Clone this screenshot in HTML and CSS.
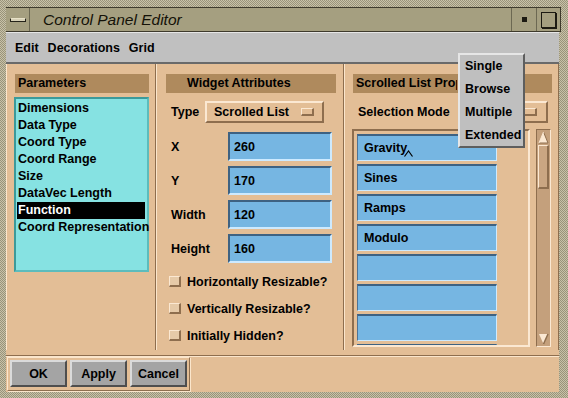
FILE: index.html
```html
<!DOCTYPE html>
<html lang="en">
<head>
	<meta charset="UTF-8">
	<title>Control Panel Editor</title>
	<link rel="stylesheet" href="styles.css">
</head>
<body>
	<div class="screen">
		<div class="titlebar">
			<div class="tb-menu"><span class="tb-bar"></span></div>
			<div class="tb-title">Control Panel Editor</div>
			<div class="tb-min"><span class="tb-dot"></span></div>
			<div class="tb-max"><span class="tb-square"></span></div>
		</div>
		<div class="window">
			<div class="menubar">
				<span>Edit</span>
				<span>Decorations</span>
				<span>Grid</span>
			</div>
			<div class="work">
				<!-- parameters -->
				<div class="panel p-params">
					<div class="head">Parameters</div>
					<ul class="plist">
						<li>Dimensions</li>
						<li>Data Type</li>
						<li>Coord Type</li>
						<li>Coord Range</li>
						<li>Size</li>
						<li>DataVec Length</li>
						<li class="sel">Function</li>
						<li>Coord Representation</li>
					</ul>
				</div>
				<!-- widget attributes -->
				<div class="panel p-widget">
					<div class="head head-widget">Widget Attributes</div>
					<div class="row row-type">
						<span class="lbl lbl-type">Type</span>
						<div class="option opt-type">Scrolled List<span class="opt-ind"></span></div>
					</div>
					<div class="row row-field first">
						<span class="lbl">X</span>
						<div class="field">260</div>
					</div>
					<div class="row row-field">
						<span class="lbl">Y</span>
						<div class="field">170</div>
					</div>
					<div class="row row-field">
						<span class="lbl">Width</span>
						<div class="field">120</div>
					</div>
					<div class="row row-field">
						<span class="lbl">Height</span>
						<div class="field">160</div>
					</div>
					<div class="checks">
						<div class="check"><span class="check-box"></span>Horizontally Resizable?</div>
						<div class="check"><span class="check-box"></span>Vertically Resizable?</div>
						<div class="check"><span class="check-box"></span>Initially Hidden?</div>
					</div>
				</div>
				<!-- scrolled list properties, partly under the open menu -->
				<div class="panel p-list">
					<div class="head"><span class="head-clip">Scrolled List Properties</span></div>
					<div class="row row-mode">
						<span class="lbl">Selection Mode</span>
						<div class="option opt-mode"><span class="opt-ind"></span></div>
					</div>
					<div class="list-wrap">
						<div class="slist">
							<div class="sitem">Gravity</div>
							<div class="sitem">Sines</div>
							<div class="sitem">Ramps</div>
							<div class="sitem">Modulo</div>
							<div class="sitem"></div>
							<div class="sitem"></div>
							<div class="sitem"></div>
							<div class="sitem"></div>
						</div>
						<div class="sbar">
							<svg class="arrow" width="11" height="13" viewBox="0 0 11 13">
								<polygon points="5.5,1 10,12 1,12" fill="#fbe8d2"/>
								<polyline points="5.5,1 10,12 1,12" fill="none" stroke="#8e6e4e" stroke-width="1"/>
								<line x1="5.5" y1="1" x2="1" y2="12" stroke="#fbe8d2" stroke-width="1"/>
							</svg>
							<div class="thumb"></div>
							<div class="trough"></div>
							<svg class="arrow" width="11" height="12" viewBox="0 0 11 12">
								<polygon points="1,1 10,1 5.5,11" fill="#fbe8d2"/>
								<line x1="10" y1="1" x2="5.5" y2="11" stroke="#8e6e4e" stroke-width="1.5"/>
							</svg>
						</div>
					</div>
				</div>
			</div>
			<div class="actions">
				<div class="btnbox">
					<div class="btn">OK</div>
					<div class="btn">Apply</div>
					<div class="btn">Cancel</div>
				</div>
			</div>
		</div>

		<!-- open option menu -->
		<ul class="popup">
			<li>Single</li>
			<li>Browse</li>
			<li>Multiple</li>
			<li>Extended</li>
		</ul>
		<svg class="caret" width="9" height="7" viewBox="0 0 9 7">
			<polyline points="0.5,6.5 4.5,1 8.5,6.5" fill="none" stroke="#000" stroke-width="1.2"/>
		</svg>
	</div>
</body>
</html>
```

FILE: styles.css
```css
*{
    margin:0;
    padding:0;
    box-sizing:border-box;
}
body{
    width:568px;
    height:398px;
    overflow:hidden;
    font-family:"Liberation Sans", Arial, sans-serif;
    font-weight:bold;
    font-size:12.5px;
    color:#000;
}
ul{
    list-style:none;
}

/* window frame */
.screen{
    position:relative;
    width:568px;
    height:398px;
    padding:7px 7px 6px 6px;
    background-color:#aea88e;
    background-image:repeating-conic-gradient(#c8c2a8 0 25%, #99937a 0 50%);
    background-size:2px 2px;
}
.titlebar{
    display:flex;
    height:25px;
    background:#a59f80;
    border:1px solid #3e3a2c;
    border-left:none;
}
.tb-menu{
    width:24px;
    border-right:1px solid #6c6852;
    display:flex;
    align-items:center;
    justify-content:center;
}
.tb-bar{
    width:16px;
    height:4px;
    background:#d6d0b6;
    border:1px solid #25231a;
    border-top-color:#e8e2c8;
}
.tb-title{
    flex:1;
    padding-left:13px;
    font-weight:normal;
    font-style:italic;
    font-size:15.5px;
    line-height:23px;
    color:#141208;
}
.tb-min,
.tb-max{
    width:25px;
    border-left:1px solid #6c6852;
    display:flex;
    align-items:center;
    justify-content:center;
}
.tb-dot{
    width:5px;
    height:5px;
    background:#1c1a12;
    border:1px solid #1c1a12;
}
.tb-max{
    width:24px;
}
.tb-square{
    width:15px;
    height:16px;
    border:1px solid #1c1a12;
    box-shadow:1px 1px 0 #1c1a12;
}

.window{
    width:553px;
    height:360px;
    display:flex;
    flex-direction:column;
    background:#e3be96;
}
.menubar{
    height:32px;
    background:#c0c0c0;
    border-top:1px solid #e6e6e6;
    border-bottom:2px solid #6a6a6a;
    padding-left:9px;
    display:flex;
    align-items:center;
    gap:9px;
}

/* panels */
.work{
    display:flex;
    height:292px;
    border-bottom:1px solid #8e6e4e;
}
.panel{
    height:286px;
    border-left:1px solid #fbe6cc;
    border-right:1px solid #8e6e4e;
    padding-top:10px;
    display:flex;
    flex-direction:column;
}
.p-params{
    width:150px;
}
.p-widget{
    width:188px;
}
.p-list{
    flex:1;
}
.head{
    height:19px;
    line-height:19px;
    background:#af8a5d;
    padding-left:3px;
    white-space:nowrap;
    overflow:hidden;
}
.p-params .head{
    margin:0 6px 0 8px;
}
.p-widget .head{
    margin:0 7px 0 9px;
    padding-left:21px;
}
.p-list .head{
    margin:0 6px 0 8px;
}
.head-clip{
    display:inline-block;
    width:101px;
    overflow:hidden;
    vertical-align:top;
}

.plist{
    margin:4px 0 0 7px;
    width:135px;
    height:175px;
    background:#86e2e2;
    border:2px solid;
    border-color:#3c9a9a #5cbcbc #5cbcbc #3c9a9a;
    padding:1px 2px 0 1px;
}
.plist li{
    height:17px;
    line-height:17px;
    padding-left:1px;
    white-space:nowrap;
}
.plist .sel{
    background:#000;
    color:#fff;
}

.row{
    display:flex;
    align-items:center;
    padding-left:14px;
}
.row-type{
    height:22px;
    margin-top:8px;
}
.lbl-type{
    width:34px;
}
.row-field{
    height:29px;
    margin-top:5px;
}
.row-field.first{
    margin-top:9px;
}
.row-field .lbl{
    width:57px;
}
.option{
    height:22px;
    display:flex;
    align-items:center;
    padding-left:7px;
    border:2px solid;
    border-color:#fbe8d2 #8e6e4e #8e6e4e #fbe8d2;
    white-space:nowrap;
}
.opt-type{
    width:119px;
}
.opt-ind{
    width:13px;
    height:8px;
    margin-left:auto;
    margin-right:8px;
    border-style:solid;
    border-width:1px 2px 2px 1px;
    border-color:#fbe8d2 #8e6e4e #8e6e4e #fbe8d2;
}
.field{
    width:104px;
    height:29px;
    background:#76b6e2;
    border:2px solid;
    border-color:#3e6282 #cdeaff #cdeaff #3e6282;
    padding-left:4px;
    display:flex;
    align-items:center;
}

.checks{
    margin-top:5px;
}
.check{
    height:27px;
    display:flex;
    align-items:center;
    padding-left:12px;
    white-space:nowrap;
}
.check-box{
    width:12px;
    height:11px;
    margin-right:6px;
    background:#e6caa8;
    border-style:solid;
    border-width:1px 2px 2px 1px;
    border-color:#fbe8d2 #8e6e4e #8e6e4e #fbe8d2;
}

.row-mode{
    height:22px;
    margin-top:8px;
    padding-left:13px;
}
.row-mode .lbl{
    width:102px;
}
.opt-mode{
    width:88px;
}
.opt-mode .opt-ind{
    margin-right:9px;
}
.list-wrap{
    display:flex;
    margin:6px 0 0 7px;
}
.slist{
    width:178px;
    height:218px;
    border:2px solid;
    border-color:#8e6e4e #fbe8d2 #fbe8d2 #8e6e4e;
    padding:3px 0 0 3px;
    overflow:hidden;
    display:flex;
    flex-direction:column;
    gap:3px;
}
.sitem{
    flex-shrink:0;
    width:140px;
    height:27px;
    background:#76b6e2;
    border:1px solid;
    border-top-width:2px;
    border-color:#3e6282 #cdeaff #cdeaff #4e7294;
    padding-left:6px;
    display:flex;
    align-items:center;
}
.sbar{
    width:15px;
    height:218px;
    margin-left:6px;
    background:#c4a07c;
    border:1px solid;
    border-color:#8e6e4e #fbe8d2 #fbe8d2 #8e6e4e;
    padding:1px 0 1px 1px;
    display:flex;
    flex-direction:column;
}
.arrow{
    display:block;
    flex-shrink:0;
}
.thumb{
    width:11px;
    height:44px;
    margin-top:1px;
    background:#caa682;
    border-style:solid;
    border-width:1px 2px 2px 1px;
    border-color:#fbe8d2 #8e6e4e #8e6e4e #fbe8d2;
}
.trough{
    flex:1;
}

/* bottom buttons */
.actions{
    height:36px;
    border-top:1px solid #fbe6cc;
    padding:0 0 0 1px;
}
.btnbox{
    display:flex;
    gap:3px;
    width:183px;
    height:34px;
    border:1px solid;
    border-color:#fbe6cc #8e6e4e #8e6e4e #fbe6cc;
    padding:2px 2px 1px 2px;
    box-shadow:1px 1px 0 #fbe6cc;
}
.btn{
    width:57px;
    height:27px;
    background:#a4a4a4;
    border:2px solid;
    border-color:#dadada #4e4e4e #4e4e4e #dadada;
    display:flex;
    align-items:center;
    justify-content:center;
}

/* overlays */
.popup{
    position:absolute;
    left:458px;
    top:53px;
    width:67px;
    height:95px;
    background:#bfbfbf;
    border:2px solid;
    border-color:#e6e6e6 #5e5e5e #5e5e5e #e6e6e6;
    padding-left:5px;
}
.popup li{
    height:23px;
    line-height:23px;
    white-space:nowrap;
}
.caret{
    position:absolute;
    left:404px;
    top:150px;
}
```
